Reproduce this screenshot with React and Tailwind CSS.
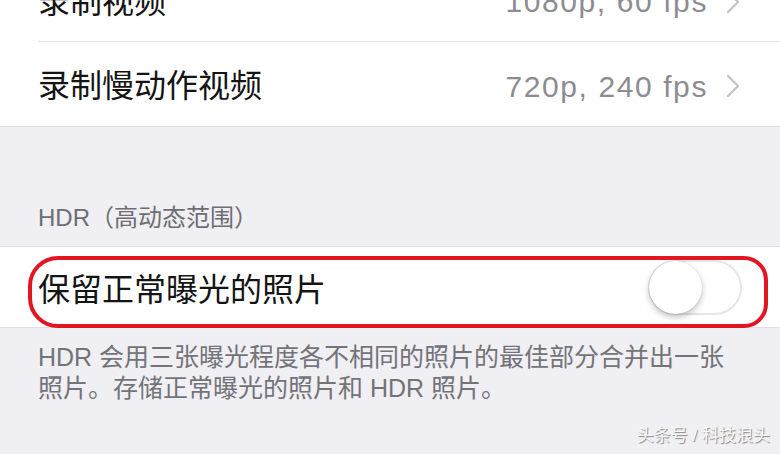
import React from "react";

const font = { fontFamily: '"Liberation Sans", "Noto Sans CJK SC", sans-serif' };

function Chevron() {
  return (
    <svg width="14" height="24" viewBox="0 0 14 24" fill="none" className="ml-[18px]">
      <path d="M2 2l10 10L2 22" stroke="#c4c4c9" strokeWidth="2.4" strokeLinecap="round" strokeLinejoin="round" />
    </svg>
  );
}

function Row({ label, value, last }) {
  return (
    <div className="pl-[38px]">
      <div className={"h-[84px] flex items-center justify-between pr-[40px] pt-[4px] " + (last ? "" : "border-b border-[#e3e3e6]")}>
        <span className="text-[32px] text-[#141414]">{label}</span>
        <span className="flex items-center text-[30px] tracking-[1.6px] text-[#8c8c91]">
          {value}
          <Chevron />
        </span>
      </div>
    </div>
  );
}

function Toggle() {
  return (
    <div className="relative w-[94px] h-[55px] rounded-full border-2 border-[#e6e6ea] bg-white">
      <div className="absolute left-[-1px] top-[-1px] w-[53px] h-[53px] rounded-full bg-white shadow-[0_3px_6px_rgba(0,0,0,0.25),0_0_1px_rgba(0,0,0,0.2)]" />
    </div>
  );
}

export default function App() {
  return (
    <div className="relative w-[780px] h-[454px] overflow-hidden bg-[#efeff4]" style={font}>
      <div className="-mt-[42px] bg-white border-b border-[#e0e0e4]">
        <Row label="录制视频" value="1080p, 60 fps" />
        <Row label="录制慢动作视频" value="720p, 240 fps" last />
      </div>

      <div className="h-[119px] flex items-end pb-[10px] pl-[38px] text-[24px] text-[#6d6d72]">
        HDR（高动态范围）
      </div>

      <div className="relative h-[82px] bg-white border-y border-[#e0e0e4] flex items-center justify-between pl-[38px] pr-[38px]">
        <span className="pt-[6px] text-[32px] text-[#141414]">保留正常曝光的照片</span>
        <Toggle />
        <div className="absolute left-[28px] right-[12px] top-[9px] bottom-[-1px] border-[4px] border-[#e11620] rounded-l-[30px] rounded-r-[24px]" />
      </div>

      <div className="pt-[14px] pl-[38px] pr-[30px] text-[25px] leading-[31px] text-[#737378]">
        <p>HDR 会用三张曝光程度各不相同的照片的最佳部分合并出一张</p>
        <p>照片。存储正常曝光的照片和 HDR 照片。</p>
      </div>

      <div className="absolute right-[10px] bottom-[6px] text-[17px] text-[#f8f8f8] [text-shadow:1px_1px_1px_rgba(0,0,0,0.45)]">
        头条号 / 科技浪头
      </div>
    </div>
  );
}
